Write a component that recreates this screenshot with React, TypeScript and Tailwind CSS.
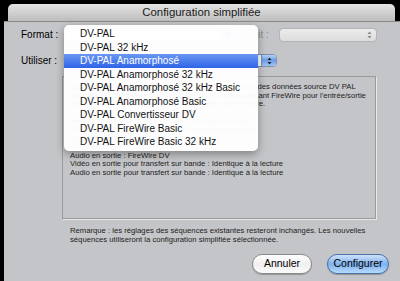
import React from "react";

function Arrows({ color = "#222" }: { color?: string }) {
  return (
    <svg width="5" height="8" viewBox="0 0 5 8">
      <path d="M2.5 0.5 L4.5 3 L0.5 3 Z" fill={color} />
      <path d="M2.5 7.5 L4.5 5 L0.5 5 Z" fill={color} />
    </svg>
  );
}

const items = [
  "DV-PAL",
  "DV-PAL 32 kHz",
  "DV-PAL Anamorphosé",
  "DV-PAL Anamorphosé 32 kHz",
  "DV-PAL Anamorphosé 32 kHz Basic",
  "DV-PAL Anamorphosé Basic",
  "DV-PAL Convertisseur DV",
  "DV-PAL FireWire Basic",
  "DV-PAL FireWire Basic 32 kHz",
];

const boxLines = [
  "Utilisez cette configuration simplifiée lors du traitement des données source DV PAL",
  "enregistrées au format anamorphosé 16:9, tout en utilisant FireWire pour l'entrée/sortie",
  "vidéo et audio avec un contrôle de l'appareil via FireWire.",
  "",
  "Séquence prédéfinie : DV PAL 48 kHz Anamorphosé",
  "Préréglage de capture : DV PAL 48 kHz Anamorphosé",
  "Contrôle de l'appareil : FireWire PAL",
  "Vidéo en sortie : FireWire DV",
  "Audio en sortie : FireWire DV",
  "Vidéo en sortie pour transfert sur bande : Identique à la lecture",
  "Audio en sortie pour transfert sur bande : Identique à la lecture",
];

export default function App() {
  return (
    <div className="w-[400px] h-[281px] bg-black overflow-hidden pt-[4px] font-['Liberation_Sans',Arial,sans-serif] text-black">
      <div className="ml-[8px] mr-[5px] h-[17px] rounded-t-[5px] bg-gradient-to-b from-[#e4e4e4] to-[#bdbdbd] flex items-center justify-center text-[11.4px] text-[#1a1a1a]">
        Configuration simplifiée
      </div>
      <div className="relative ml-[4px] h-[260px] bg-[#c4c5c8] border-t border-[#8a8a8a] pl-[17px] pt-[6px]">
        {/* Row 1 */}
        <div className="flex items-center h-[14px]">
          <div className="w-[43px] text-[10px] leading-none">Format :</div>
          <div className="w-[171px] h-[14px] rounded-[4px] bg-white border border-[#8e8e8e] flex justify-end overflow-hidden">
            <div className="w-[14px] h-full bg-gradient-to-b from-[#a9c8f0] via-[#6a9be3] to-[#9cc4f1] flex items-center justify-center">
              <Arrows />
            </div>
          </div>
          <div className="ml-[5px] w-[39px] text-[10px] leading-none text-[#8e8e8e]">Débit :</div>
          <div className="w-[98px] h-[14px] rounded-[4px] bg-gradient-to-b from-[#ececec] to-[#dcdcdc] border border-[#b4b4b4] flex items-center justify-end pr-[4px]">
            <Arrows color="#8a8a8a" />
          </div>
        </div>
        {/* Row 2 */}
        <div className="mt-[12px] flex items-center h-[13px]">
          <div className="w-[43px] text-[10px] leading-none">Utiliser :</div>
          <div className="w-[213px] h-[13px] rounded-[4px] bg-white border border-[#7f8fae] flex justify-end overflow-hidden">
            <div className="w-[15px] h-full bg-gradient-to-b from-[#b3d0f4] via-[#6d9de4] to-[#a3c9f3] border-l border-[#6e8fc4] flex items-center justify-center">
              <Arrows />
            </div>
          </div>
        </div>
        {/* Box */}
        <div className="mt-[9px] ml-[41px] w-[314px] h-[143px] border border-[#9a9a9a] shadow-[1px_1px_0_rgba(255,255,255,0.6)] pt-[6px] pl-[7px] text-[7.7px] leading-[8.6px] text-[#1c1c1c]">
          {boxLines.map((l, i) => (
            <div key={i} className="whitespace-nowrap h-[8.6px]">
              {l}
            </div>
          ))}
        </div>
        {/* Remarque */}
        <div className="mt-[7px] ml-[49px] text-[7.7px] leading-[9px] text-[#1c1c1c] whitespace-nowrap">
          Remarque : les réglages des séquences existantes resteront inchangés. Les nouvelles
          <br />
          séquences utiliseront la configuration simplifiée sélectionnée.
        </div>
        {/* Buttons */}
        <div className="mt-[10px] pr-[11px] flex justify-end gap-[15px]">
          <div className="w-[60px] h-[20px] rounded-full border border-[#8a8a8a] bg-gradient-to-b from-[#ffffff] via-[#f0f0f0] to-[#fafafa] shadow-[0_1px_1px_rgba(0,0,0,0.25)] flex items-center justify-center text-[10.5px]">
            Annuler
          </div>
          <div className="w-[62px] h-[20px] rounded-full border border-[#4b6fa8] bg-gradient-to-b from-[#cfe2f9] via-[#7fb1ee] to-[#b5dafc] shadow-[0_1px_1px_rgba(0,0,0,0.25)] flex items-center justify-center text-[10.5px]">
            Configurer
          </div>
        </div>

        {/* Popup menu overlay */}
        <div className="absolute left-[60px] top-[3px] w-[194px] py-[2px] rounded-[5px] bg-white/[0.97] shadow-[0_3px_8px_rgba(0,0,0,0.35)]">
          {items.map((it, i) => (
            <div
              key={it}
              className={
                i === 2
                  ? "h-[13.5px] pl-[16px] flex items-center text-[10px] text-white bg-gradient-to-b from-[#6b97f3] to-[#2f63e6]"
                  : "h-[13.5px] pl-[16px] flex items-center text-[10px] text-[#111]"
              }
            >
              {it}
            </div>
          ))}
        </div>
      </div>
    </div>
  );
}
